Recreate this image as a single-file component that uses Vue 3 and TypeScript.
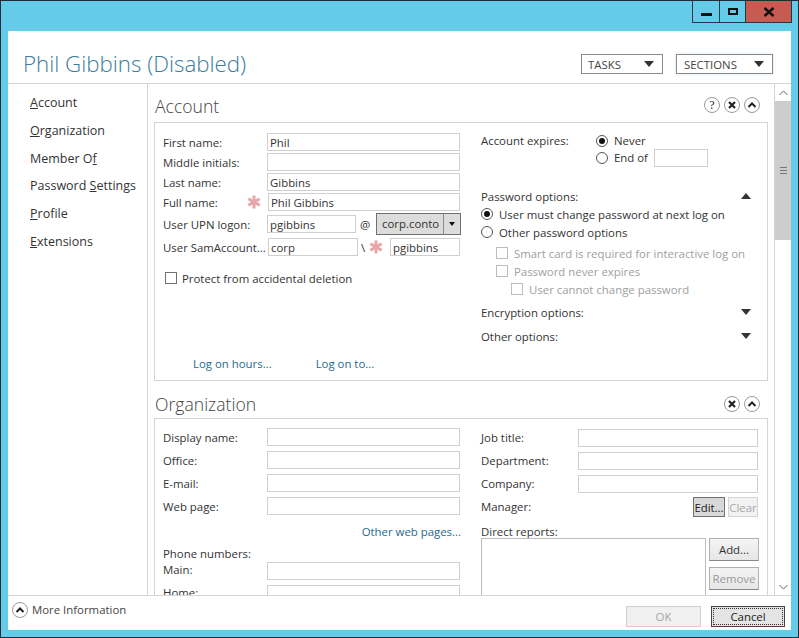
<template>
  <div class="window">
    <div class="titlebar">
      <div class="win-buttons">
        <button class="win-btn win-min"><span class="min-glyph"></span></button>
        <button class="win-btn win-max"><span class="max-glyph"></span></button>
        <button class="win-btn win-close">
          <svg width="12" height="10" viewBox="0 0 12 10"><path d="M1.5 1l9 8M10.5 1l-9 8" stroke="#111" stroke-width="2.4" fill="none" /></svg>
        </button>
      </div>
    </div>

    <div class="client">
      <header class="page-head">
        <h1 class="page-title">Phil Gibbins (Disabled)</h1>
        <div class="head-actions">
          <button class="drop-btn tasks"><span>TASKS</span><i class="tri-down"></i></button>
          <button class="drop-btn sections"><span>SECTIONS</span><i class="tri-down"></i></button>
        </div>
      </header>

      <div class="middle">
        <nav class="side-nav">
          <a v-for="item in navItems" :key="item.label" class="nav-item">{{ item.before }}<u>{{ item.key }}</u>{{ item.after }}</a>
        </nav>

        <main class="content">
          <!-- Account -->
          <div class="section-head">
            <h2>Account</h2>
            <div class="round-icons">
              <span class="round-icon help">?</span>
              <span class="round-icon"><svg width="10" height="10" viewBox="0 0 10 10"><path d="M2 2l6 6M8 2l-6 6" stroke="#222" stroke-width="2.2" fill="none" /></svg></span>
              <span class="round-icon"><svg width="10" height="8" viewBox="0 0 10 8"><path d="M1.5 6L5 2.5 8.5 6" stroke="#222" stroke-width="2" fill="none" /></svg></span>
            </div>
          </div>
          <section class="card account-card">
            <div class="account-left">
              <div class="form-row"><label>First name:</label><input class="text-in" value="Phil" /></div>
              <div class="form-row"><label>Middle initials:</label><input class="text-in" /></div>
              <div class="form-row"><label>Last name:</label><input class="text-in" value="Gibbins" /></div>
              <div class="form-row">
                <label class="label-req">Full name:
                  <svg class="req" viewBox="0 0 14 14"><path d="M7 0.5v13M1.3 3.7l11.4 6.6M12.7 3.7L1.3 10.3" stroke="#e9a6a6" stroke-width="3" fill="none" /></svg>
                </label>
                <input class="text-in full-in" value="Phil Gibbins" />
              </div>
              <div class="form-row upn-row">
                <label>User UPN logon:</label>
                <input class="text-in upn-in" value="pgibbins" />
                <span class="at">@</span>
                <div class="combo"><span class="combo-val">corp.conto</span><span class="combo-arrow"><i class="tri-down small"></i></span></div>
              </div>
              <div class="form-row sam-row">
                <label>User SamAccount...</label>
                <input class="text-in sam-a" value="corp" />
                <span class="slash">\</span>
                <svg class="req" viewBox="0 0 14 14"><path d="M7 0.5v13M1.3 3.7l11.4 6.6M12.7 3.7L1.3 10.3" stroke="#e9a6a6" stroke-width="3" fill="none" /></svg>
                <input class="text-in sam-b" value="pgibbins" />
              </div>
              <div class="check-row protect"><span class="check"></span><span>Protect from accidental deletion</span></div>
              <div class="link-row"><a>Log on hours...</a><a>Log on to...</a></div>
            </div>

            <div class="account-right">
              <div class="expires">
                <span class="expires-label">Account expires:</span>
                <div class="expires-opts">
                  <div class="radio-row exp-radio"><span class="radio on"></span>Never</div>
                  <div class="radio-row exp-radio"><span class="radio"></span>End of<input class="text-in date-in" /></div>
                </div>
              </div>
              <div class="opt-head pw-head"><span>Password options:</span><i class="tri-up"></i></div>
              <div class="radio-row"><span class="radio on"></span>User must change password at next log on</div>
              <div class="radio-row"><span class="radio"></span>Other password options</div>
              <div class="check-row off lvl1 first-off"><span class="check"></span><span>Smart card is required for interactive log on</span></div>
              <div class="check-row off lvl1"><span class="check"></span><span>Password never expires</span></div>
              <div class="check-row off lvl2"><span class="check"></span><span>User cannot change password</span></div>
              <div class="opt-head enc-head"><span>Encryption options:</span><i class="tri-down dark"></i></div>
              <div class="opt-head other-head"><span>Other options:</span><i class="tri-down dark"></i></div>
            </div>
          </section>

          <!-- Organization -->
          <div class="section-head org-head">
            <h2>Organization</h2>
            <div class="round-icons">
              <span class="round-icon"><svg width="10" height="10" viewBox="0 0 10 10"><path d="M2 2l6 6M8 2l-6 6" stroke="#222" stroke-width="2.2" fill="none" /></svg></span>
              <span class="round-icon"><svg width="10" height="8" viewBox="0 0 10 8"><path d="M1.5 6L5 2.5 8.5 6" stroke="#222" stroke-width="2" fill="none" /></svg></span>
            </div>
          </div>
          <section class="card org-card">
            <div class="org-left">
              <div v-for="f in orgLeft" :key="f" class="org-row"><label>{{ f }}</label><input class="text-in" /></div>
              <div class="other-link"><a>Other web pages...</a></div>
              <div class="phone-title">Phone numbers:</div>
              <div class="org-row phone-row"><label>Main:</label><input class="text-in" /></div>
              <div class="org-row phone-row"><label>Home:</label><input class="text-in" /></div>
            </div>
            <div class="org-right">
              <div v-for="f in orgRight" :key="f" class="org-row job-row"><label>{{ f }}</label><input class="text-in" /></div>
              <div class="manager-row">
                <label>Manager:</label>
                <button class="mini-btn edit">Edit...</button>
                <button class="mini-btn clear">Clear</button>
              </div>
              <div class="reports-title">Direct reports:</div>
              <div class="reports">
                <div class="listbox"></div>
                <div class="reports-btns">
                  <button class="side-btn">Add...</button>
                  <button class="side-btn disabled">Remove</button>
                </div>
              </div>
            </div>
          </section>
        </main>

        <aside class="scrollbar">
          <span class="sb-btn"><svg width="9" height="6" viewBox="0 0 9 6"><path d="M0.5 5L4.5 1l4 4" stroke="#606060" fill="none" /></svg></span>
          <div class="sb-track">
            <div class="sb-thumb"><span class="grip"></span></div>
          </div>
          <span class="sb-btn"><svg width="9" height="6" viewBox="0 0 9 6"><path d="M0.5 1l4 4 4-4" stroke="#606060" fill="none" /></svg></span>
        </aside>
      </div>

      <footer class="page-foot">
        <div class="more-info">
          <span class="round-icon"><svg width="10" height="8" viewBox="0 0 10 8"><path d="M1.5 6L5 2.5 8.5 6" stroke="#222" stroke-width="2" fill="none" /></svg></span>
          <span>More Information</span>
        </div>
        <div class="foot-btns">
          <button class="foot-btn ok">OK</button>
          <button class="foot-btn cancel"><span>Cancel</span></button>
        </div>
      </footer>
    </div>
  </div>
</template>

<script setup lang="ts">
interface NavItem {
  label: string;
  before: string;
  key: string;
  after: string;
}

// key = the underlined access-key letter
const navItems: NavItem[] = [
  { label: 'Account', before: '', key: 'A', after: 'ccount' },
  { label: 'Organization', before: '', key: 'O', after: 'rganization' },
  { label: 'Member Of', before: 'Member O', key: 'f', after: '' },
  { label: 'Password Settings', before: 'Password ', key: 'S', after: 'ettings' },
  { label: 'Profile', before: '', key: 'P', after: 'rofile' },
  { label: 'Extensions', before: '', key: 'E', after: 'xtensions' }
];

const orgLeft: string[] = ['Display name:', 'Office:', 'E-mail:', 'Web page:'];
const orgRight: string[] = ['Job title:', 'Department:', 'Company:'];
</script>

<style>
html, body {
  margin: 0;
  background: #65cbe9;
}
</style>

<style scoped>
.window {
  width: 799px;
  height: 638px;
  box-sizing: border-box;
  border: 1px solid #1c2f38;
  background: #65cbe9;
  display: flex;
  flex-direction: column;
  font-family: "Open Sans", "Noto Sans", sans-serif;
  font-size: 11.4px;
  color: #333;
  overflow: hidden;
}

.titlebar {
  height: 29px;
  flex: none;
  display: flex;
  justify-content: flex-end;
  padding-right: 6px;
}

.win-buttons {
  display: flex;
  height: 21px;
  border: 1px solid #1c3a48;
  border-top: none;
}

.win-btn {
  box-sizing: border-box;
  padding: 0;
  border: none;
  border-right: 1px solid #1c3a48;
  background: transparent;
  display: flex;
  align-items: center;
  justify-content: center;
}

.win-min { width: 27px; }
.win-max { width: 26px; }

.win-close {
  width: 45px;
  border-right: none;
  background: #c75b52;
}

.min-glyph {
  width: 11px;
  height: 3px;
  background: #111;
  margin-top: 5px;
}

.max-glyph {
  width: 6px;
  height: 3px;
  border: 2px solid #111;
}

.client {
  flex: 1;
  margin: 1px 7px 7px;
  background: #fff;
  display: flex;
  flex-direction: column;
  min-height: 0;
}

.page-head {
  height: 52px;
  flex: none;
  display: flex;
  justify-content: space-between;
  align-items: flex-start;
  border-bottom: 1px solid #d4d4d4;
}

.page-title {
  margin: 18px 0 0 15px;
  font-size: 22.3px;
  line-height: 30px;
  font-weight: 300;
  color: #3b7c9b;
}

.head-actions {
  display: flex;
  gap: 13px;
  margin: 23px 18px 0 0;
}

.drop-btn {
  height: 20px;
  box-sizing: border-box;
  padding: 0 8px 0 7px;
  border: 1px solid #8a8a8a;
  background: #fff;
  font: inherit;
  color: #444;
  display: flex;
  align-items: center;
  justify-content: space-between;
}

.tasks { width: 82px; padding-left: 6px; }
.sections { width: 97px; box-shadow: 0 0 3px #d5e6f5; }

.tri-down {
  width: 0;
  height: 0;
  border-left: 5px solid transparent;
  border-right: 5px solid transparent;
  border-top: 6px solid #333;
}

.tri-down.small {
  border-left-width: 3.5px;
  border-right-width: 3.5px;
  border-top-width: 4px;
  border-top-color: #111;
}

.tri-up {
  width: 0;
  height: 0;
  border-left: 5px solid transparent;
  border-right: 5px solid transparent;
  border-bottom: 6px solid #333;
}

.middle {
  flex: 1;
  min-height: 0;
  display: flex;
}

.side-nav {
  width: 140px;
  flex: none;
  box-sizing: border-box;
  border-right: 1px solid #d4d4d4;
  padding: 5px 0 0 22px;
  display: flex;
  flex-direction: column;
}

.nav-item {
  height: 27.8px;
  line-height: 28px;
  font-size: 12.5px;
  color: #333;
  white-space: nowrap;
}

.content {
  flex: 1;
  min-width: 0;
  overflow: hidden;
  padding-left: 6px;
}

.section-head {
  height: 38px;
  width: 614px;
  display: flex;
  justify-content: space-between;
  align-items: center;
}

.org-head {
  height: 37px;
}

.section-head h2 {
  margin: 6px 0 0 1px;
  font-size: 17.6px;
  font-weight: 300;
  color: #444;
}

.org-head h2 {
  margin-top: 8px;
}

.round-icons {
  display: flex;
  gap: 4px;
  margin-right: 8px;
  margin-top: 4px;
}

.org-head .round-icons {
  margin-top: 8px;
}

.round-icon {
  width: 16px;
  height: 16px;
  box-sizing: border-box;
  border: 1px solid #9a9a9a;
  border-radius: 50%;
  display: flex;
  align-items: center;
  justify-content: center;
  background: #fff;
}

.help {
  font-family: "Liberation Serif", serif;
  font-size: 12px;
  color: #222;
}

.card {
  width: 614px;
  box-sizing: border-box;
  border: 1px solid #d4d4d4;
  display: flex;
}

.account-card {
  height: 259px;
}

.account-left {
  width: 317px;
  flex: none;
  box-sizing: border-box;
  padding: 10px 0 0 8px;
}

.form-row {
  display: flex;
  align-items: center;
  height: 18px;
  margin-bottom: 2px;
}

.form-row label,
.org-row label {
  width: 104px;
  flex: none;
  white-space: nowrap;
}

.label-req {
  display: flex;
  justify-content: space-between;
  align-items: center;
  padding-right: 6px;
  box-sizing: border-box;
}

.req {
  width: 14px;
  height: 14px;
  flex: none;
}

.text-in {
  width: 193px;
  height: 18px;
  box-sizing: border-box;
  border: 1px solid #cfcfcf;
  padding: 0 2px;
  font: inherit;
  color: #333;
  background: #fff;
  outline: none;
}

.full-in {
  width: 192px;
  margin-left: 1px;
}

.upn-row {
  height: 22px;
  margin-top: 1px;
  margin-bottom: 3px;
}

.upn-in { width: 89px; }

.at {
  width: 18px;
  text-align: center;
  flex: none;
  margin-right: 2px;
}

.combo {
  width: 85px;
  height: 22px;
  box-sizing: border-box;
  border: 1px solid #707070;
  background: #dcdcdc;
  display: flex;
}

.combo-val {
  flex: 1;
  padding-left: 5px;
  line-height: 20px;
  border-right: 1px solid #8a8a8a;
}

.combo-arrow {
  width: 16px;
  display: flex;
  align-items: center;
  justify-content: center;
}

.sam-a { width: 90px; margin-left: 1px; }

.slash {
  width: 8px;
  margin-left: 3px;
  flex: none;
}

.sam-b { width: 70px; margin-left: 7px; }

.check-row {
  display: flex;
  align-items: center;
  gap: 5px;
  height: 18px;
  white-space: nowrap;
}

.check {
  width: 12px;
  height: 12px;
  box-sizing: border-box;
  border: 1px solid #707070;
  background: #fff;
  flex: none;
}

.protect {
  margin: 13px 0 0 2px;
}

.link-row {
  display: flex;
  margin-top: 69px;
  padding-left: 30px;
  gap: 44px;
}

.link-row a,
.other-link a {
  color: #1e6b8e;
}

.account-right {
  flex: 1;
  min-width: 0;
  padding: 10px 16px 0 9px;
}

.expires {
  display: flex;
  height: 36px;
}

.expires-label {
  width: 115px;
  flex: none;
}

.expires-opts {
  margin-top: -1px;
}

.radio-row {
  display: flex;
  align-items: center;
  gap: 6px;
  height: 18px;
  white-space: nowrap;
}

.exp-radio {
  height: 17px;
}

.radio {
  width: 12px;
  height: 12px;
  box-sizing: border-box;
  border: 1px solid #555;
  border-radius: 50%;
  background: #fff;
  flex: none;
  position: relative;
}

.radio.on::after {
  content: '';
  position: absolute;
  inset: 2px;
  border-radius: 50%;
  background: #111;
}

.date-in {
  width: 54px;
}

.opt-head {
  display: flex;
  justify-content: space-between;
  align-items: center;
}

.pw-head {
  margin-top: 18px;
  height: 18px;
}

.check-row.off {
  gap: 6px;
  color: #a0a0a0;
}

.check-row.off .check {
  border-color: #bdbdbd;
}

.lvl1 { margin-left: 15px; }
.lvl2 { margin-left: 30px; }
.first-off { margin-top: 3px; }

.enc-head { margin-top: 2px; height: 24px; }
.other-head { height: 24px; }

.org-card {
  height: 300px;
}

.org-left {
  width: 317px;
  flex: none;
  box-sizing: border-box;
  padding: 9px 0 0 8px;
}

.org-row {
  display: flex;
  align-items: center;
  height: 18px;
  margin-bottom: 5px;
}

.phone-row label {
  margin-top: -3px;
}

.other-link {
  width: 298px;
  text-align: right;
  margin-top: 9px;
  height: 16px;
}

.phone-title {
  margin-top: 6px;
  height: 16px;
}

.org-right {
  flex: 1;
  min-width: 0;
  padding: 10px 9px 0 9px;
}

.job-row label {
  width: 97px;
  margin-top: -2px;
}

.job-row .text-in {
  width: 180px;
}

.manager-row {
  display: flex;
  align-items: center;
  height: 20px;
  margin-top: -1px;
}

.manager-row label {
  flex: 1;
  margin-top: -2px;
}

.mini-btn {
  height: 20px;
  padding: 0;
  font: inherit;
  box-sizing: border-box;
}

.edit {
  width: 32px;
  border: 1px solid #707070;
  background: #d8d8d8;
  color: #222;
}

.clear {
  width: 30px;
  margin-left: 3px;
  border: 1px solid #d4d4d4;
  background: #f2f2f2;
  color: #a8a8a8;
}

.reports-title {
  margin-top: 7px;
  height: 14px;
}

.reports {
  display: flex;
  justify-content: space-between;
  margin-right: -1px;
}

.listbox {
  width: 225px;
  height: 120px;
  box-sizing: border-box;
  border: 1px solid #bdbdbd;
}

.reports-btns {
  display: flex;
  flex-direction: column;
  gap: 6px;
}

.side-btn {
  width: 50px;
  height: 23px;
  box-sizing: border-box;
  border: 1px solid #b0b0b0;
  border-bottom-color: #888;
  background: linear-gradient(#f4f4f4, #e6e6e6);
  font: inherit;
  color: #333;
  padding: 0;
}

.side-btn.disabled {
  color: #9a9a9a;
}

.scrollbar {
  width: 17px;
  flex: none;
  box-sizing: border-box;
  border-left: 1px solid #d4d4d4;
  display: flex;
  flex-direction: column;
  background: #fff;
}

.sb-btn {
  height: 17px;
  flex: none;
  display: flex;
  align-items: center;
  justify-content: center;
}

.sb-track {
  flex: 1;
  min-height: 0;
}

.sb-thumb {
  height: 139px;
  background: #cdcdcd;
  display: flex;
  align-items: center;
  justify-content: center;
}

.grip {
  width: 7px;
  height: 5px;
  border-top: 1px solid #777;
  border-bottom: 1px solid #777;
  background: linear-gradient(#cdcdcd 40%, #777 40%, #777 60%, #cdcdcd 60%);
}

.page-foot {
  height: 35px;
  flex: none;
  box-sizing: border-box;
  border-top: 1px solid #d4d4d4;
  display: flex;
  justify-content: space-between;
}

.more-info {
  display: flex;
  align-items: center;
  gap: 4px;
  margin: -7px 0 0 4px;
  color: #444;
}

.foot-btns {
  display: flex;
  gap: 10px;
  margin: 10px 6px 0 0;
}

.foot-btn {
  width: 75px;
  height: 21px;
  box-sizing: border-box;
  font: inherit;
  padding: 0;
}

.ok {
  border: 1px solid #cfcfcf;
  background: #f0f0f0;
  color: #a6a6a6;
}

.cancel {
  width: 74px;
  border: 1px solid #444;
  background: #e4e4e4;
  color: #222;
  padding: 1px;
}

.cancel span {
  display: block;
  height: 100%;
  box-sizing: border-box;
  border: 1px dotted #333;
  line-height: 15px;
}
</style>
